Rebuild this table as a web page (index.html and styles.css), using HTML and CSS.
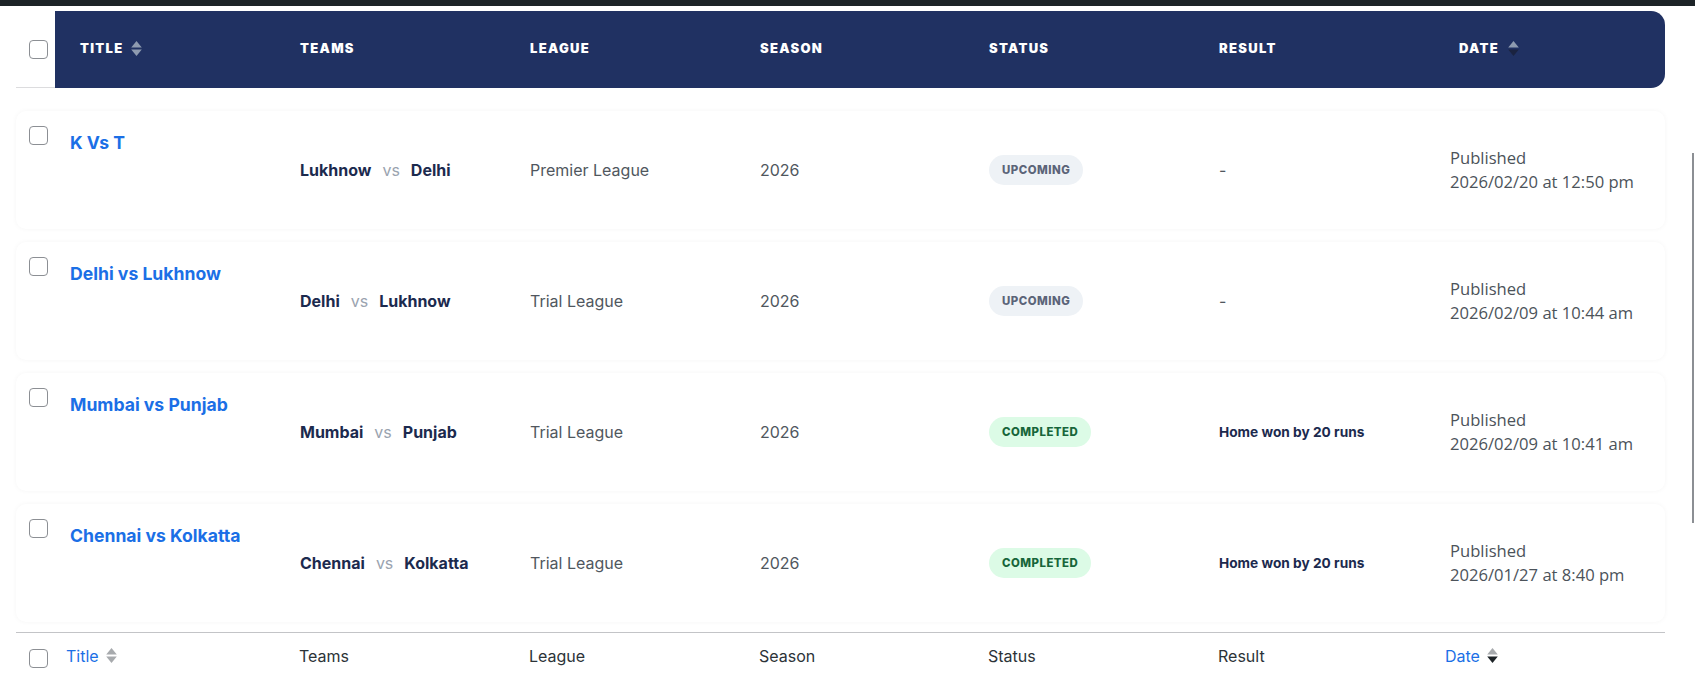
FILE: index.html
```html
<!DOCTYPE html>
<html lang="en">
<head>
<meta charset="utf-8">
<title>Matches</title>
<link rel="stylesheet" href="styles.css">
</head>
<body>
<div class="topbar"></div>
<div class="scrollmark"></div>
<div class="table">
  <div class="grid head">
    <div class="c-check"><span class="cb"></span></div>
    <div class="hc c-title">Title <svg class="sort" viewBox="0 0 10 16" width="11" height="17"><polygon points="0,7 5,1 10,7" fill="#8e9bb0"/><polygon points="0,9 10,9 5,15" fill="#8e9bb0"/></svg></div>
    <div class="hc">Teams</div>
    <div class="hc">League</div>
    <div class="hc">Season</div>
    <div class="hc">Status</div>
    <div class="hc">Result</div>
    <div class="hc c-date c-last">Date <svg class="sort" viewBox="0 0 10 16" width="11" height="17"><polygon points="0,7 5,1 10,7" fill="#8e9bb0"/><polygon points="0,9 10,9 5,15" fill="#1a2340"/></svg></div>
  </div>

  <div class="rows">
    <div class="grid row">
      <div class="c-check"><span class="cb"></span></div>
      <div class="c-title">K Vs T</div>
      <div class="teams"><span class="team">Lukhnow</span><span class="vs">vs</span><span class="team">Delhi</span></div>
      <div class="plain">Premier League</div>
      <div class="plain">2026</div>
      <div class="status"><span class="badge upcoming">Upcoming</span></div>
      <div class="plain">-</div>
      <div class="date">Published<br>2026/02/20 at 12:50 pm</div>
    </div>
    <div class="grid row">
      <div class="c-check"><span class="cb"></span></div>
      <div class="c-title">Delhi vs Lukhnow</div>
      <div class="teams"><span class="team">Delhi</span><span class="vs">vs</span><span class="team">Lukhnow</span></div>
      <div class="plain">Trial League</div>
      <div class="plain">2026</div>
      <div class="status"><span class="badge upcoming">Upcoming</span></div>
      <div class="plain">-</div>
      <div class="date">Published<br>2026/02/09 at 10:44 am</div>
    </div>
    <div class="grid row">
      <div class="c-check"><span class="cb"></span></div>
      <div class="c-title">Mumbai vs Punjab</div>
      <div class="teams"><span class="team">Mumbai</span><span class="vs">vs</span><span class="team">Punjab</span></div>
      <div class="plain">Trial League</div>
      <div class="plain">2026</div>
      <div class="status"><span class="badge completed">Completed</span></div>
      <div class="result">Home won by 20 runs</div>
      <div class="date">Published<br>2026/02/09 at 10:41 am</div>
    </div>
    <div class="grid row">
      <div class="c-check"><span class="cb"></span></div>
      <div class="c-title">Chennai vs Kolkatta</div>
      <div class="teams"><span class="team">Chennai</span><span class="vs">vs</span><span class="team">Kolkatta</span></div>
      <div class="plain">Trial League</div>
      <div class="plain">2026</div>
      <div class="status"><span class="badge completed">Completed</span></div>
      <div class="result">Home won by 20 runs</div>
      <div class="date">Published<br>2026/01/27 at 8:40 pm</div>
    </div>
  </div>

  <div class="grid foot">
    <div class="c-check"><span class="cb"></span></div>
    <div class="fc c-title link">Title <svg class="sort" viewBox="0 0 10 16" width="11" height="17"><polygon points="0,7 5,1 10,7" fill="#a7aaad"/><polygon points="0,9 10,9 5,15" fill="#a7aaad"/></svg></div>
    <div class="fc">Teams</div>
    <div class="fc">League</div>
    <div class="fc">Season</div>
    <div class="fc">Status</div>
    <div class="fc">Result</div>
    <div class="fc c-date link">Date <svg class="sort" viewBox="0 0 10 16" width="11" height="17"><polygon points="0,7 5,1 10,7" fill="#a7aaad"/><polygon points="0,9 10,9 5,15" fill="#1d2327"/></svg></div>
  </div>
</div>
</body>
</html>
```
FILE: styles.css
```css
html, body {
  margin: 0;
  background: #ffffff;
}
body {
  font-family: Inter, "Noto Sans", Arial, sans-serif;
  color: #2c3338;
  position: relative;
  min-height: 691px;
}
.topbar {
  height: 6px;
  background: #1d2327;
}
.scrollmark {
  position: absolute;
  left: 1692px;
  top: 153px;
  width: 2px;
  height: 370px;
  background: #8c8f94;
}
.table {
  width: 1649px;
  margin-left: 16px;
  padding-top: 5px;
}
.grid {
  display: grid;
  grid-template-columns: 39px 244px 230px 230px 229px 230px 226px 1fr;
}
.cb {
  display: block;
  width: 19px;
  height: 19px;
  box-sizing: border-box;
  border: 1px solid #8c8f94;
  border-radius: 4px;
  background: #fff;
}
.sort {
  display: block;
  flex: none;
}

/* header */
.head {
  height: 77px;
}
.head .c-check {
  box-sizing: border-box;
  border-bottom: 1px solid #dcdcde;
  display: flex;
  align-items: center;
  padding-left: 13px;
}
.hc {
  background: #203162;
  color: #ffffff;
  display: flex;
  align-items: center;
  gap: 8px;
  font-weight: 900;
  font-size: 13px;
  letter-spacing: 1.3px;
  text-transform: uppercase;
  padding-left: 1px;
  padding-bottom: 3px;
  box-sizing: border-box;
}
.head .c-title { padding-left: 25px; }
.head .c-date { padding-left: 15px; gap: 9px; }
.head .c-last { border-radius: 0 14px 14px 0; }

/* rows */
.rows {
  margin-top: 23px;
  display: flex;
  flex-direction: column;
  gap: 13px;
}
.row {
  height: 118px;
  background: #fff;
  border-radius: 10px;
  box-shadow: 0 0 5px rgba(0, 0, 0, 0.045);
  align-items: center;
}
.row .c-check {
  align-self: start;
  padding: 15px 0 0 13px;
}
.row .c-title {
  align-self: start;
  padding: 20px 0 0 15px;
  font-weight: 700;
  font-size: 17.6px;
  line-height: 24px;
  color: #1b6fe6;
}
.teams {
  display: flex;
  align-items: center;
  gap: 11px;
  font-size: 16px;
  padding-left: 1px;
}
.team {
  font-weight: 700;
  color: #1c2a4e;
}
.vs {
  color: #9aa3af;
}
.plain {
  font-size: 16px;
  color: #50575e;
  padding-left: 1px;
}
.status { padding-left: 1px; }
.badge {
  display: inline-flex;
  align-items: center;
  height: 30px;
  padding: 0 13px;
  border-radius: 15px;
  font-size: 11.4px;
  font-weight: 800;
  letter-spacing: 0.5px;
  text-transform: uppercase;
}
.upcoming {
  background: #eef2f6;
  color: #5b6478;
}
.completed {
  background: #dcfbe6;
  color: #17663a;
}
.result {
  font-size: 13.7px;
  font-weight: 700;
  color: #1c2a4e;
  padding-left: 1px;
}
.date {
  font-family: "Open Sans", "Noto Sans", Arial, sans-serif;
  font-size: 16.6px;
  line-height: 24px;
  color: #4c535a;
  padding-left: 6px;
}

/* footer */
.foot {
  margin-top: 10px;
  border-top: 1px solid #c3c4c7;
  height: 45px;
  align-items: center;
}
.foot .c-check { padding-left: 13px; padding-top: 5px; }
.fc {
  display: flex;
  align-items: center;
  gap: 7px;
  font-size: 16px;
  color: #2c3338;
}
.foot .c-title { padding-left: 11px; }
.foot .c-date { padding-left: 1px; }
.link { color: #1b6fe6; }
```
